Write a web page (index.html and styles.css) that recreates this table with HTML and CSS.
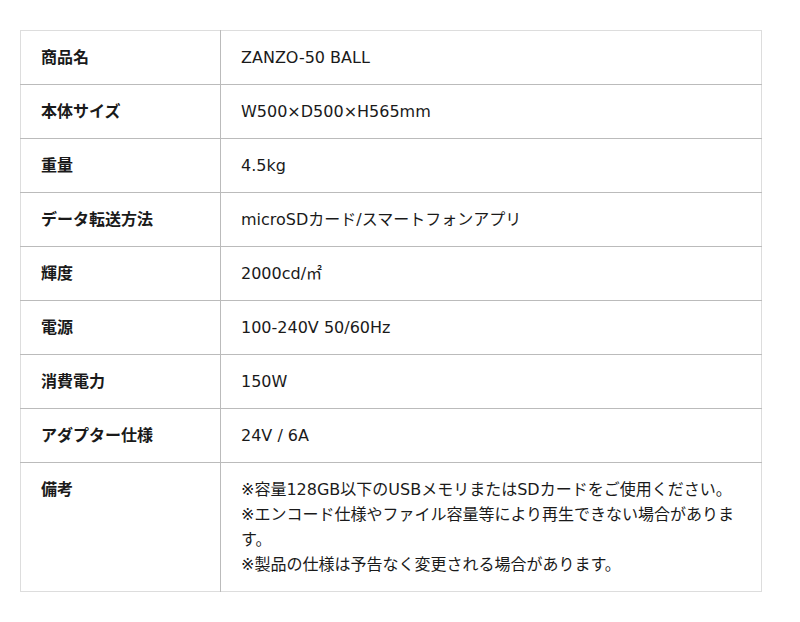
FILE: index.html
```html
<!DOCTYPE html>
<html lang="ja">
<head>
<meta charset="utf-8">
<link rel="stylesheet" href="styles.css">
</head>
<body>
<table class="spec">
  <tbody>
    <tr><th>商品名</th><td>ZANZO-50 BALL</td></tr>
    <tr><th>本体サイズ</th><td>W500×D500×H565mm</td></tr>
    <tr><th>重量</th><td>4.5kg</td></tr>
    <tr><th>データ転送方法</th><td>microSDカード/スマートフォンアプリ</td></tr>
    <tr><th>輝度</th><td>2000cd/㎡</td></tr>
    <tr><th>電源</th><td>100-240V 50/60Hz</td></tr>
    <tr><th>消費電力</th><td>150W</td></tr>
    <tr><th>アダプター仕様</th><td>24V / 6A</td></tr>
    <tr><th>備考</th><td>※容量128GB以下のUSBメモリまたはSDカードをご使用ください。<br>※エンコード仕様やファイル容量等により再生できない場合があります。<br>※製品の仕様は予告なく変更される場合があります。</td></tr>
  </tbody>
</table>
</body>
</html>
```
FILE: styles.css
```css
html, body {
  margin: 0;
  padding: 0;
  background: #fff;
}
body {
  padding: 30px 38px 0 20px;
  font-family: "DejaVu Sans", "Noto Sans CJK JP", sans-serif;
  font-size: 16px;
  color: #1a1a1a;
}
.spec {
  width: 742px;
  border-collapse: collapse;
  border: 1px solid #ddd;
  table-layout: fixed;
}
.spec tr {
  border-bottom: 1px solid #bbb;
}
.spec tr:last-child {
  border-bottom: 1px solid #ddd;
}
.spec th,
.spec td {
  padding: 14px 20px;
  line-height: 25px;
  text-align: left;
  vertical-align: top;
}
.spec th {
  width: 159px;
  font-weight: bold;
  border-right: 1px solid #bbb;
}
.spec td {
  font-weight: normal;
}
```
